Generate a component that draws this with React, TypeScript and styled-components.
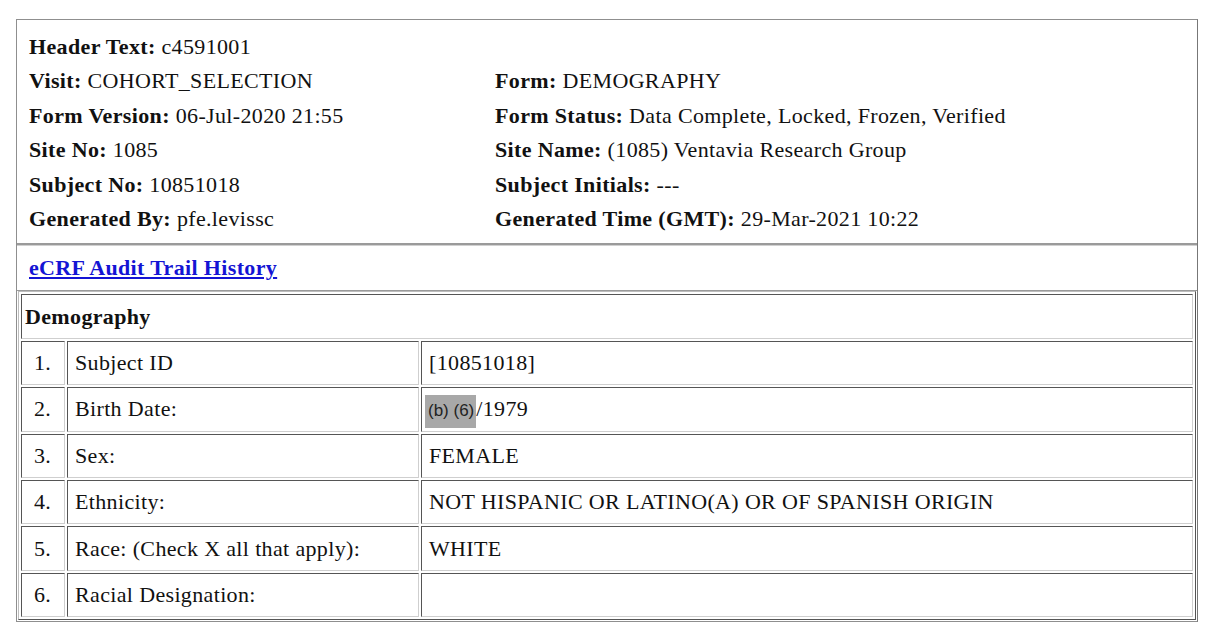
import React from 'react'
import styled, { createGlobalStyle } from 'styled-components'

const GlobalStyle = createGlobalStyle`
  body {
    margin: 0;
    background: #FFFFFF;
    font-family: "Liberation Serif", "Times New Roman", serif;
    color: #111111;
  }
`
const Page = styled.div`
  padding: 19px 17px 0 16px;
`
const Frame = styled.div`
  width: 1182px;
  border: 1px solid #8f8f8f;
  border-right-color: #777777;
  box-sizing: border-box;
`
const HeaderBlock = styled.div`
  display: grid;
  grid-template-columns: 466px 1fr;
  padding: 10px 12px 7px;
  font-size: 22px;
  letter-spacing: 0.35px;
  line-height: 34.4px;
  border-bottom: 2px solid #9a9a9a;
`
const Field = styled.div<{ $wide?: boolean }>`
  grid-column: ${p => (p.$wide ? '1 / span 2' : 'auto')};
  white-space: nowrap;
`
const Label = styled.b`
  font-weight: 700;
`
const LinkRow = styled.div`
  padding: 8px 12px 8px;
  font-size: 22px;
  letter-spacing: 0.35px;
  line-height: 28px;
  border-top: 1px solid #d0d0d0;
  border-bottom: 1px solid #9a9a9a;
`
const AuditLink = styled.a`
  color: #1414d4;
  font-weight: 700;
  text-decoration: underline;
`
const TableWrap = styled.div`
  padding: 0 1px 1px;
`
const Grid = styled.table`
  width: 100%;
  border-collapse: separate;
  border-spacing: 2px;
  border: 1px solid;
  border-color: #bdbdbd #555555 #555555 #bdbdbd;
  font-size: 22px;
  letter-spacing: 0.35px;
`
const Cell = styled.td<{ $num?: boolean }>`
  height: 42.4px;
  padding: 0 ${p => (p.$num ? '4px 0 12px' : '7px')};
  border: 1px solid;
  border-color: #555555 #cfcfcf #cfcfcf #555555;
  text-align: left;
  white-space: nowrap;
`
const SectionCell = styled(Cell)`
  font-weight: 700;
  padding-left: 3px;
`
const Redacted = styled.span`
  background: #a8a8a8;
  font-family: "Liberation Sans", Arial, sans-serif;
  font-size: 17px;
  letter-spacing: 0;
  color: #222222;
  padding: 6px 2px 8px 3px;
  margin-left: -4px;
`

const rows: { n: string; label: string; value: React.ReactNode }[] = [
  { n: '1.', label: 'Subject ID', value: '[10851018]' },
  { n: '2.', label: 'Birth Date:', value: <><Redacted>(b) (6)</Redacted>/1979</> },
  { n: '3.', label: 'Sex:', value: 'FEMALE' },
  { n: '4.', label: 'Ethnicity:', value: 'NOT HISPANIC OR LATINO(A) OR OF SPANISH ORIGIN' },
  { n: '5.', label: 'Race: (Check X all that apply):', value: 'WHITE' },
  { n: '6.', label: 'Racial Designation:', value: '' },
]

export default function App() {
  return (
    <Page>
      <GlobalStyle />
      <Frame>
        <HeaderBlock>
          <Field $wide><Label>Header Text:</Label> c4591001</Field>
          <Field><Label>Visit:</Label> COHORT_SELECTION</Field>
          <Field><Label>Form:</Label> DEMOGRAPHY</Field>
          <Field><Label>Form Version:</Label> 06-Jul-2020 21:55</Field>
          <Field><Label>Form Status:</Label> Data Complete, Locked, Frozen, Verified</Field>
          <Field><Label>Site No:</Label> 1085</Field>
          <Field><Label>Site Name:</Label> (1085) Ventavia Research Group</Field>
          <Field><Label>Subject No:</Label> 10851018</Field>
          <Field><Label>Subject Initials:</Label> ---</Field>
          <Field><Label>Generated By:</Label> pfe.levissc</Field>
          <Field><Label>Generated Time (GMT):</Label> 29-Mar-2021 10:22</Field>
        </HeaderBlock>
        <LinkRow>
          <AuditLink href="#">eCRF Audit Trail History</AuditLink>
        </LinkRow>
        <TableWrap>
          <Grid>
            <colgroup>
              <col style={{ width: '44px' }} />
              <col style={{ width: '352px' }} />
              <col />
            </colgroup>
            <tbody>
              <tr>
                <SectionCell colSpan={3}>Demography</SectionCell>
              </tr>
              {rows.map(r => (
                <tr key={r.n}>
                  <Cell $num>{r.n}</Cell>
                  <Cell>{r.label}</Cell>
                  <Cell>{r.value}</Cell>
                </tr>
              ))}
            </tbody>
          </Grid>
        </TableWrap>
      </Frame>
    </Page>
  )
}
